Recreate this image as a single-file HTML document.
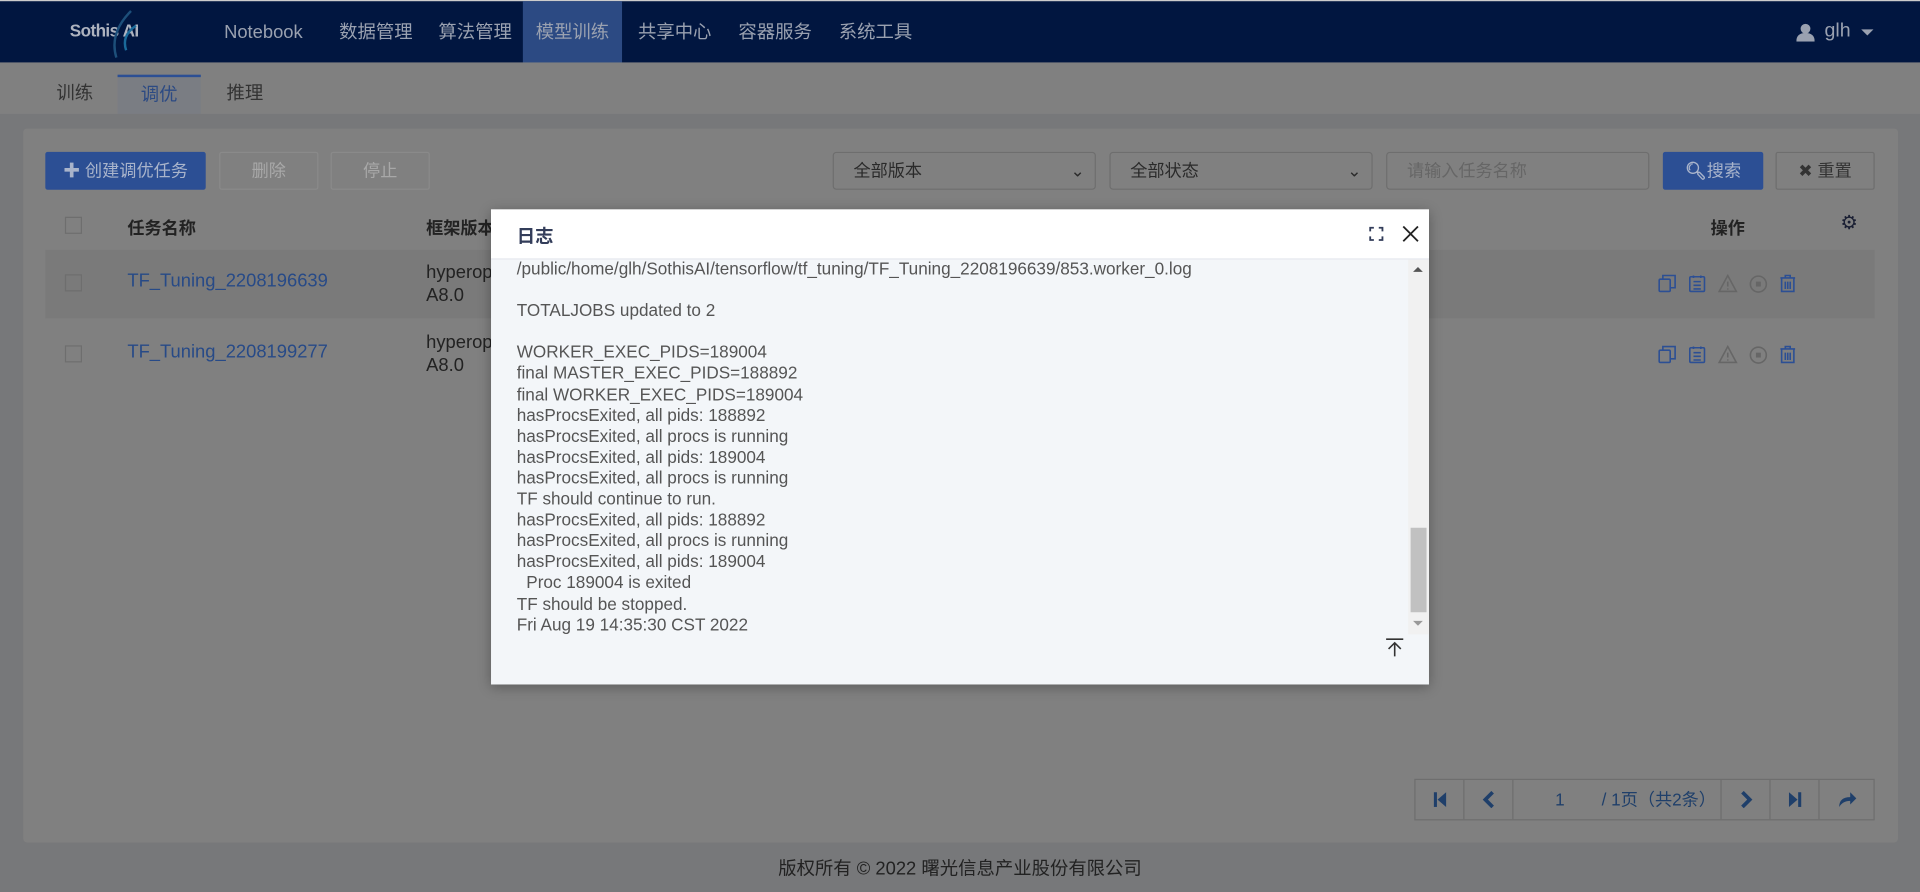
<!DOCTYPE html>
<html><head><meta charset="utf-8"><style>
*{box-sizing:border-box;margin:0;padding:0}
html,body{width:1920px;height:892px;overflow:hidden;background:#77787a}
#w{width:1568px;height:728px;position:relative;transform:scale(1.22449);transform-origin:0 0;font-family:"Liberation Sans","Noto Sans CJK SC",sans-serif;font-size:14px}
.a{position:absolute}
.nav{left:0;top:0;width:1568px;height:51px;background:#011640;border-top:1px solid #ccc}
.ni{top:0;height:51px;line-height:51px;color:#9aa1b0;font-size:15px;padding:0 12px}
.tabs{left:0;top:51px;width:1568px;height:42px;background:#808080}
.tab{top:10px;height:32px;line-height:32px;color:#333;font-size:15px}
.panel{left:19px;top:105px;width:1531px;height:583px;background:#808080;border-radius:3px}
.btn{height:31px;line-height:29px;text-align:center;border:1px solid #8a8a8a;border-radius:2px;color:#a8a8a8;font-size:14px}
.sel{height:31px;border:1px solid #6e6e6e;border-radius:3px;background:#808080;color:#2a2a2a;line-height:29px;padding-left:16px}
.link{color:#274a87;font-size:15px}
.pg{top:636px;height:34px;border:1px solid #6e6e6e;color:#1f3f6a}
.pgc{position:absolute;top:0;height:32px;line-height:32px;text-align:center;border-right:1px solid #6e6e6e}
.pgc svg{margin-top:9px}
.modal{left:401px;top:171px;width:766px;height:388px;background:#f3f6f9;box-shadow:0 2px 10px rgba(0,0,0,.3)}
.mh{left:0;top:0;width:766px;height:41px;background:#fff;border-bottom:1px solid #e5e8ee}
.log{left:21px;top:40px;color:#555;font-size:14px;line-height:17.1px;white-space:pre;font-family:"Liberation Sans",sans-serif}
</style></head><body><div id="w">
<div class="a nav">
 <div class="a" style="left:57px;top:16px;color:#aeb3bf;font-weight:bold;font-size:14px;letter-spacing:-.5px">Sothis&nbsp;AI</div>
 <svg class="a" style="left:85px;top:6px" width="30" height="42"><path d="M22 2 Q4 20 10 40" stroke="#1d4f7a" stroke-width="2" fill="none"/><path d="M26 14 Q14 22 18 34" stroke="#1a6a9a" stroke-width="2" fill="none"/></svg>
 <div class="a ni" style="left:171px">Notebook</div>
 <div class="a ni" style="left:265px">数据管理</div>
 <div class="a ni" style="left:346px">算法管理</div>
 <div class="a ni" style="left:427px;width:81px;background:#2c4a83;text-align:center;padding:0">模型训练</div>
 <div class="a ni" style="left:509px">共享中心</div>
 <div class="a ni" style="left:591px">容器服务</div>
 <div class="a ni" style="left:673px">系统工具</div>
 <svg class="a" style="left:1467px;top:18px" width="15" height="15"><circle cx="7.5" cy="4.5" r="4" fill="#9aa1b0"/><path d="M0 15 Q0 8 7.5 8 Q15 8 15 15Z" fill="#9aa1b0"/></svg>
 <div class="a" style="left:1490px;top:16px;color:#9aa1b0;font-size:16px">glh</div>
 <div class="a" style="left:1520px;top:23px;border:5px solid transparent;border-top-color:#9aa1b0"></div>
</div>
<div class="a tabs">
 <div class="a tab" style="left:46px">训练</div>
 <div class="a tab" style="left:96px;width:68px;background:#7a7d83;border-top:2px solid #2c4f94;text-align:center;color:#2c4a83;line-height:30px">调优</div>
 <div class="a tab" style="left:185px">推理</div>
</div>
<div class="a panel"></div>
<div class="a btn" style="left:37px;top:124px;width:131px;background:#2c4f94;border-color:#2c4f94;color:#a9b4cb">✚ 创建调优任务</div>
<div class="a btn" style="left:179px;top:124px;width:81px">删除</div>
<div class="a btn" style="left:270px;top:124px;width:81px">停止</div>
<div class="a sel" style="left:680px;top:124px;width:215px">全部版本<span style="position:absolute;right:8px;top:0">⌄</span></div>
<div class="a sel" style="left:906px;top:124px;width:215px">全部状态<span style="position:absolute;right:8px;top:0">⌄</span></div>
<div class="a sel" style="left:1132px;top:124px;width:215px;color:#666">请输入任务名称</div>
<div class="a btn" style="left:1358px;top:124px;width:82px;background:#2c4f94;border-color:#2c4f94;color:#a9b4cb;font-weight:normal"><b>🔍︎</b>搜索</div>
<div class="a btn" style="left:1450px;top:124px;width:81px;color:#333;border-color:#6e6e6e">✖ 重置</div>
<div class="a" style="left:53px;top:177px;width:14px;height:14px;border:1px solid #6e6e6e"></div>
<div class="a" style="left:104px;top:176px;font-weight:bold;color:#222">任务名称</div>
<div class="a" style="left:348px;top:176px;font-weight:bold;color:#222">框架版本</div>
<div class="a" style="left:1397px;top:176px;font-weight:bold;color:#222">操作</div>
<div class="a" style="left:1503px;top:172px;font-size:16px;color:#1a1f33">⚙</div>
<div class="a" style="left:37px;top:204px;width:1494px;height:56px;background:#7a7a7a"></div>
<div class="a" style="left:53px;top:224px;width:14px;height:14px;border:1px solid #6e6e6e"></div>
<div class="a" style="left:53px;top:282px;width:14px;height:14px;border:1px solid #6e6e6e"></div>
<div class="a link" style="left:104px;top:221px">TF_Tuning_2208196639</div>
<div class="a link" style="left:104px;top:279px">TF_Tuning_2208199277</div>
<div class="a" style="left:348px;top:213px;color:#222;font-size:15px;line-height:19px">hyperop<br>A8.0</div>
<div class="a" style="left:348px;top:270px;color:#222;font-size:15px;line-height:19px">hyperop<br>A8.0</div>
<svg class="a" style="left:1354px;top:224px" width="115" height="75">
<g fill="none" stroke="#2c4f94" stroke-width="1.3">
<rect x="1" y="4" width="9" height="10" rx="1"/><path d="M4 4V1H14V11H10"/>
<rect x="26" y="2" width="12" height="12" rx="1"/><path d="M29 1V3M35 1V3M29 6H35M29 9H35M29 12H35"/>
<path d="M57 1L64 14H50Z" stroke="#666"/><path d="M57 6V10M57 11.5V12.5" stroke="#666"/>
<circle cx="82" cy="8" r="6.5" stroke="#666"/>
<path d="M100 3H112M104 3V1H108V3M101 3V14H111V3M104 6V12M106 6V12M108 6V12"/>
</g><rect x="80" y="6" width="4" height="4" fill="#666"/>
<g transform="translate(0,58)" fill="none" stroke="#2c4f94" stroke-width="1.3">
<rect x="1" y="4" width="9" height="10" rx="1"/><path d="M4 4V1H14V11H10"/>
<rect x="26" y="2" width="12" height="12" rx="1"/><path d="M29 1V3M35 1V3M29 6H35M29 9H35M29 12H35"/>
<path d="M57 1L64 14H50Z" stroke="#666"/><path d="M57 6V10M57 11.5V12.5" stroke="#666"/>
<circle cx="82" cy="8" r="6.5" stroke="#666"/>
<path d="M100 3H112M104 3V1H108V3M101 3V14H111V3M104 6V12M106 6V12M108 6V12"/>
</g><rect x="80" y="64" width="4" height="4" fill="#666"/>
</svg>
<div class="a pg" style="left:1155px;width:376px">
 <div class="pgc" style="left:0;width:40px"><svg width="12" height="14"><rect x="1" y="1" width="2.5" height="12" fill="#1f3f6a"/><path d="M11 1V13L4 7Z" fill="#1f3f6a"/></svg></div>
 <div class="pgc" style="left:40px;width:40px"><svg width="12" height="14"><path d="M9 1L3 7L9 13" stroke="#1f3f6a" stroke-width="3" fill="none"/></svg></div>
 <div class="pgc" style="left:80px;width:170px;text-align:left"><span style="position:absolute;left:34px">1</span><span style="position:absolute;left:72px">/ 1页（共2条）</span></div>
 <div class="pgc" style="left:250px;width:40px"><svg width="12" height="14"><path d="M3 1L9 7L3 13" stroke="#1f3f6a" stroke-width="3" fill="none"/></svg></div>
 <div class="pgc" style="left:290px;width:40px"><svg width="12" height="14"><path d="M1 1V13L8 7Z" fill="#1f3f6a"/><rect x="8.5" y="1" width="2.5" height="12" fill="#1f3f6a"/></svg></div>
 <div class="pgc" style="left:330px;width:45px;border:0"><svg width="16" height="14"><path d="M1 13Q1 5 10 5V1L15 6L10 11V8Q4 8 1 13Z" fill="#1f3f6a"/></svg></div>
</div>
<div class="a" style="left:0;top:698px;width:1568px;text-align:center;color:#222;font-size:15px">版权所有 © 2022 曙光信息产业股份有限公司</div>
<div class="a modal">
 <div class="a mh">
  <div class="a" style="left:21px;top:11px;font-weight:bold;color:#333d5a;font-size:15px">日志</div>
  <svg class="a" style="left:717px;top:14px" width="12" height="12" fill="none" stroke="#333d5a" stroke-width="1.5"><path d="M1 4V1H4M8 1H11V4M11 8V11H8M4 11H1V8"/></svg>
  <svg class="a" style="left:744px;top:13px" width="14" height="14" stroke="#222" stroke-width="1.5"><path d="M1 1L13 13M13 1L1 13"/></svg>
 </div>
 <div class="a" style="left:749px;top:41px;width:17px;height:306px;background:#f1f1f1"></div>
 <div class="a" style="left:751px;top:260px;width:13px;height:69px;background:#c1c1c1"></div>
 <div class="a" style="left:753px;top:47px;border:4px solid transparent;border-bottom-color:#555;border-top:0"></div>
 <div class="a" style="left:753px;top:336px;border:4px solid transparent;border-top-color:#999;border-bottom:0"></div>
 <div class="a log">/public/home/glh/SothisAI/tensorflow/tf_tuning/TF_Tuning_2208196639/853.worker_0.log

TOTALJOBS updated to 2

WORKER_EXEC_PIDS=189004
final MASTER_EXEC_PIDS=188892
final WORKER_EXEC_PIDS=189004
hasProcsExited, all pids: 188892
hasProcsExited, all procs is running
hasProcsExited, all pids: 189004
hasProcsExited, all procs is running
TF should continue to run.
hasProcsExited, all pids: 188892
hasProcsExited, all procs is running
hasProcsExited, all pids: 189004
  Proc 189004 is exited
TF should be stopped.
Fri Aug 19 14:35:30 CST 2022</div>
 <svg class="a" style="left:730px;top:350px" width="16" height="16" fill="none" stroke="#333" stroke-width="1.3"><path d="M1 1H15M8 15V4M3 9L8 4L13 9"/></svg>
</div>
</div></body></html>
